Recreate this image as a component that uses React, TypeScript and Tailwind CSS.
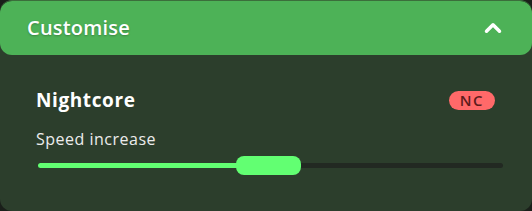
import { ChevronUp } from "lucide-react"

export default function App() {
  return (
    <div className="w-[532px] h-[211px] bg-[#1a1f1a]" style={{ fontFamily: "'Open Sans', Lato, sans-serif" }}>
      <div className="h-full rounded-xl bg-[#2c3e2c] border-t border-[#3b6e3b] overflow-hidden flex flex-col">
        <div className="h-[54px] shrink-0 bg-[#4db257] rounded-xl flex items-center justify-between pl-[27px] pr-[26px]">
          <span className="text-white text-[20px] font-semibold tracking-[0.2px] [text-shadow:0_1px_2px_rgba(0,0,0,0.25)]">
            Customise
          </span>
          <ChevronUp className="text-white w-[26px] h-[26px]" strokeWidth={3.2} />
        </div>
        <div className="px-[36px] pt-[35px]">
          <div className="flex items-center justify-between h-[20px] pr-[1px]">
            <span className="text-white text-[19px] leading-[20px] font-bold tracking-[0.6px]">Nightcore</span>
            <span className="bg-[#ff6969] text-[#5e1c1c] text-[15px] font-semibold leading-none rounded-full px-[11px] py-[2px] tracking-[1.5px]">
              NC
            </span>
          </div>
          <div className="mt-[19px] text-[#ececec] text-[16px] leading-[20px] tracking-[0.5px]">Speed increase</div>
          <div className="relative mt-[7px] h-[19px] ml-[2px] mr-[-7px]">
            <div className="absolute left-0 right-0 top-[7px] h-[5px] rounded-full bg-[#222922]" />
            <div className="absolute left-0 w-[205px] top-[7px] h-[5px] rounded-full bg-[#62ff72]" />
            <div className="absolute left-[198px] w-[65px] top-0 h-[19px] rounded-[8px] bg-[#62ff72]" />
          </div>
        </div>
      </div>
    </div>
  )
}
